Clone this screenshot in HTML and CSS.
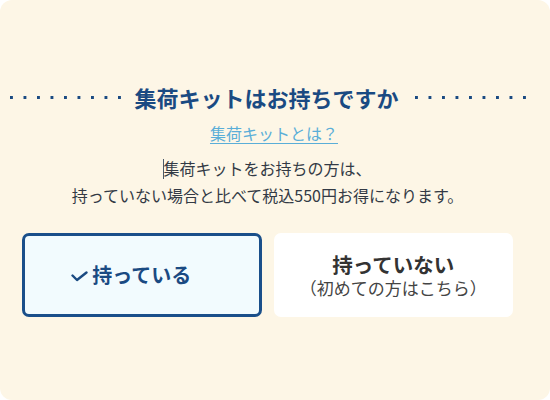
FILE: index.html
```html
<!DOCTYPE html>
<html lang="ja">
<head>
<meta charset="utf-8">
<title>集荷キット</title>
<link rel="stylesheet" href="styles.css">
</head>
<body>
<div class="card">
  <div class="title-row">
    <span class="dots"></span>
    <h2 class="title">集荷キットはお持ちですか</h2>
    <span class="dots"></span>
  </div>
  <div class="link-row"><a class="link" href="#">集荷キットとは？</a></div>
  <p class="desc"><span class="caret"></span>集荷キットをお持ちの方は、<br>持っていない場合と比べて税込550円お得になります。</p>
  <div class="choices">
    <button class="choice selected" type="button">
      <span class="label">
        <svg class="check" width="17" height="11" viewBox="0 0 17 11"><path d="M1.5 4.5 L6 9 L15.5 1.5" fill="none" stroke="#1a4a82" stroke-width="2.4" stroke-linecap="round" stroke-linejoin="round"/></svg>持っている</span>
    </button>
    <button class="choice" type="button">
      <span class="main">持っていない</span>
      <span class="sub">（初めての方はこちら）</span>
    </button>
  </div>
</div>
</body>
</html>
```

FILE: styles.css
```css
html { background: #ffffff; }
body {
  margin: 0;
  font-family: "Noto Sans CJK JP", "Noto Sans", sans-serif;
}
.card {
  width: 550px;
  height: 400px;
  box-sizing: border-box;
  background: #fdf6e6;
  border-radius: 12px;
  padding: 80px 37px 0 22px;
}
.title-row {
  display: flex;
  align-items: center;
  margin: 0 -15px 0 -12px;
}
.dots {
  flex: 1;
  height: 3px;
  background-image: linear-gradient(to right, #1a4a82 3px, transparent 3px);
  background-size: 13.5px 3px;
  background-repeat: repeat-x;
}
.title {
  margin: 0 16px 0 11px;
  font-size: 22px;
  line-height: 34px;
  font-weight: 700;
  color: #1a4a82;
  white-space: nowrap;
}
.link-row {
  margin-top: 7px;
  padding-left: 13px;
  text-align: center;
  line-height: 24px;
}
.link {
  font-size: 16px;
  color: #5aaed8;
  text-decoration: underline;
  text-underline-offset: 3px;
}
.desc {
  margin: 10px 0 0 0;
  text-align: center;
  font-size: 16px;
  line-height: 27px;
  color: #333a45;
}
.caret {
  display: inline-block;
  width: 1px;
  height: 20px;
  margin-right: -1px;
  background: #4a5a6a;
  vertical-align: -4px;
}
.choices {
  margin-top: 24px;
  display: grid;
  grid-template-columns: 1fr 1fr;
  gap: 12px;
}
.choice {
  height: 84px;
  border: none;
  border-radius: 7px;
  background: #ffffff;
  font-family: inherit;
  color: #333;
  display: flex;
  flex-direction: column;
  align-items: center;
  justify-content: center;
  padding: 0;
}
.choice.selected {
  background: #f2fbfe;
  border: 3px solid #1a4f8a;
}
.label {
  position: relative;
  font-size: 20px;
  font-weight: 700;
  color: #1a4a82;
  line-height: 28px;
}
.check {
  position: absolute;
  right: 100%;
  top: 10px;
  margin-right: 4px;
}
.main {
  font-size: 20.5px;
  font-weight: 700;
  line-height: 26px;
  color: #333;
}
.sub {
  font-size: 17px;
  line-height: 22px;
  color: #444;
}
```
